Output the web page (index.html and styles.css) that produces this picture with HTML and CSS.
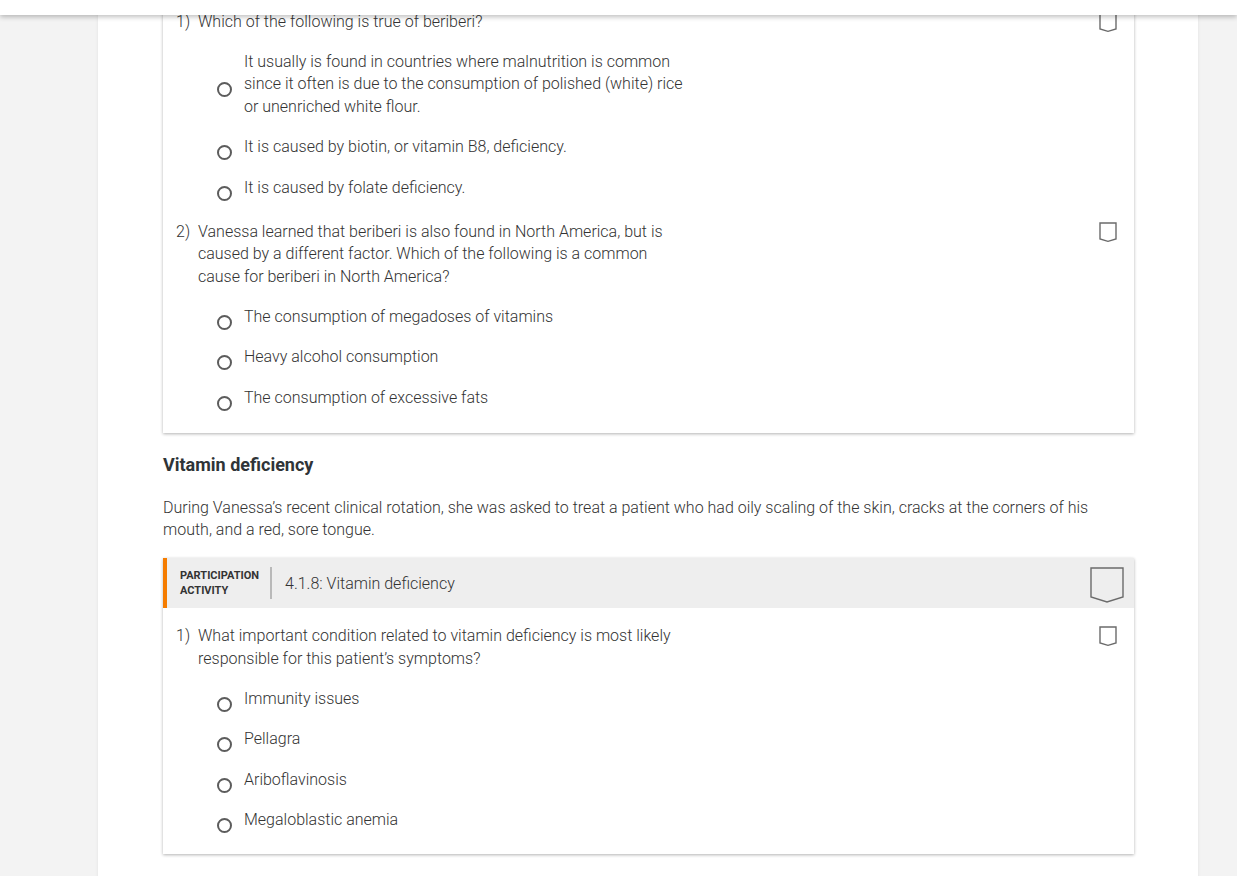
FILE: index.html
```html
<!DOCTYPE html>
<html>
<head>
<meta charset="utf-8">
<link rel="stylesheet" href="styles.css">
</head>
<body>
<div class="topbar"></div>
<div class="page">
  <main class="main">
    <section class="card first">
      <div class="question">
        <div class="q-row">
          <span class="q-num">1)</span>
          <span class="q-text">Which of the following is true of beriberi?</span>
          <svg class="chk" viewBox="0 0 18 20"><path d="M1 1H17V17L9 19.3L1 17Z"/></svg>
        </div>
        <ul class="options">
          <li class="opt"><span class="radio"></span><span class="opt-text">It usually is found in countries where malnutrition is common since it often is due to the consumption of polished (white) rice or unenriched white flour.</span></li>
          <li class="opt"><span class="radio"></span><span class="opt-text">It is caused by biotin, or vitamin B8, deficiency.</span></li>
          <li class="opt"><span class="radio"></span><span class="opt-text">It is caused by folate deficiency.</span></li>
        </ul>
      </div>
      <div class="question">
        <div class="q-row">
          <span class="q-num">2)</span>
          <span class="q-text">Vanessa learned that beriberi is also found in North America, but is caused by a different factor. Which of the following is a common cause for beriberi in North America?</span>
          <svg class="chk" viewBox="0 0 18 20"><path d="M1 1H17V17L9 19.3L1 17Z"/></svg>
        </div>
        <ul class="options">
          <li class="opt"><span class="radio"></span><span class="opt-text">The consumption of megadoses of vitamins</span></li>
          <li class="opt"><span class="radio"></span><span class="opt-text">Heavy alcohol consumption</span></li>
          <li class="opt"><span class="radio"></span><span class="opt-text">The consumption of excessive fats</span></li>
        </ul>
      </div>
    </section>

    <h2 class="heading">Vitamin deficiency</h2>
    <p class="para">During Vanessa’s recent clinical rotation, she was asked to treat a patient who had oily scaling of the skin, cracks at the corners of his mouth, and a red, sore tongue.</p>

    <section class="card activity">
      <header class="act-head">
        <div class="act-label">PARTICIPATION<br>ACTIVITY</div>
        <div class="act-title">4.1.8: Vitamin deficiency</div>
        <svg class="chk-big" viewBox="0 0 34 36"><path d="M1 1H33V30L17 35L1 30Z"/></svg>
      </header>
      <div class="act-body">
        <div class="question">
          <div class="q-row">
            <span class="q-num">1)</span>
            <span class="q-text">What important condition related to vitamin deficiency is most likely responsible for this patient’s symptoms?</span>
            <svg class="chk" viewBox="0 0 18 20"><path d="M1 1H17V17L9 19.3L1 17Z"/></svg>
          </div>
          <ul class="options">
            <li class="opt"><span class="radio"></span><span class="opt-text">Immunity issues</span></li>
            <li class="opt"><span class="radio"></span><span class="opt-text">Pellagra</span></li>
            <li class="opt"><span class="radio"></span><span class="opt-text">Ariboflavinosis</span></li>
            <li class="opt"><span class="radio"></span><span class="opt-text">Megaloblastic anemia</span></li>
          </ul>
        </div>
      </div>
    </section>
  </main>
</div>
</body>
</html>
```

FILE: styles.css
```css
* { box-sizing: border-box; }
html, body { margin: 0; padding: 0; }
body {
  background: #f3f3f3;
  font-family: Roboto, "Liberation Sans", sans-serif;
  font-size: 16px;
  font-weight: 300;
  color: #333;
  overflow: hidden;
  height: 876px;
}
.topbar {
  position: fixed;
  top: 0; left: 0; right: 0;
  height: 15px;
  background: #fff;
  box-shadow: 0 2px 5px rgba(0,0,0,0.25);
  z-index: 10;
}
.page {
  display: flex;
}
.main {
  margin-left: 98px;
  width: 1100px;
  background: #fff;
  box-shadow: 0 0 3px rgba(0,0,0,0.08);
  padding: 0 64px 40px 65px;
  min-height: 900px;
}
.card {
  background: #fff;
  box-shadow: 0 1px 3px rgba(0,0,0,0.3);
}
.card.first {
  padding: 10.75px 17px 15px 13px;
}
.question + .question { margin-top: 12.5px; }
.q-row {
  display: flex;
  align-items: flex-start;
  line-height: 22.5px;
}
.q-num { width: 22px; flex: none; }
.q-text { width: 475px; flex: none; }
.chk {
  margin-left: auto;
  margin-top: 1px;
  width: 18px;
  height: 20px;
  flex: none;
}
.chk path, .chk-big path {
  fill: none;
  stroke: #6b6b6b;
  stroke-width: 1.4;
}
.options {
  list-style: none;
  margin: 8.5px 0 0 0;
  padding: 0;
}
.opt {
  display: flex;
  align-items: center;
  padding: 9px 0;
  line-height: 22.5px;
}
.radio {
  margin-left: 41px;
  width: 15px;
  height: 15px;
  border: 2px solid #5c5c5c;
  border-radius: 50%;
  flex: none;
  transform: translateY(5px);
}
.opt-text {
  margin-left: 12px;
  width: 445px;
}
.heading {
  font-size: 18px;
  font-weight: 700;
  color: #2f3437;
  margin: 21px 0 0 0;
  line-height: 22px;
}
.para {
  margin: 21px 0 17px 0;
  line-height: 22px;
  width: 930px;
}
.act-head {
  display: flex;
  align-items: center;
  height: 50px;
  background: #eeeeee;
  border-left: 4px solid #f57c00;
  padding: 0 10px 0 13px;
}
.act-label {
  font-size: 11px;
  font-weight: 700;
  line-height: 15px;
  color: #333;
  padding-right: 11px;
  border-right: 2px solid #b9b9b9;
  height: 32px;
  display: flex;
  align-items: center;
  width: 92px;
}
.act-title {
  margin-left: 13px;
  font-size: 16px;
}
.chk-big {
  margin-left: auto;
  width: 34px;
  height: 36px;
  flex: none;
  margin-top: 4px;
}
.act-body {
  padding: 17px 17px 13px 13px;
}
```
